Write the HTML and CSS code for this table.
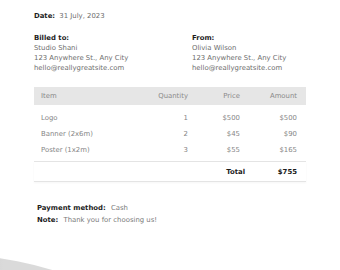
FILE: index.html
```html
<!DOCTYPE html>
<html>
<head>
<meta charset="utf-8">
<link rel="stylesheet" href="styles.css">
</head>
<body>
<div class="page">
  <div class="date"><span class="label">Date:</span> <span class="val">31 July, 2023</span></div>
  <div class="parties">
    <div class="party">
      <div class="label">Billed to:</div>
      <div>Studio Shani</div>
      <div>123 Anywhere St., Any City</div>
      <div>hello@reallygreatsite.com</div>
    </div>
    <div class="party">
      <div class="label">From:</div>
      <div>Olivia Wilson</div>
      <div>123 Anywhere St., Any City</div>
      <div>hello@reallygreatsite.com</div>
    </div>
  </div>
  <div class="table">
    <div class="row head">
      <div class="c-item">Item</div><div>Quantity</div><div>Price</div><div>Amount</div>
    </div>
    <div class="body">
      <div class="row">
        <div class="c-item">Logo</div><div>1</div><div>$500</div><div>$500</div>
      </div>
      <div class="row">
        <div class="c-item">Banner (2x6m)</div><div>2</div><div>$45</div><div>$90</div>
      </div>
      <div class="row">
        <div class="c-item">Poster (1x2m)</div><div>3</div><div>$55</div><div>$165</div>
      </div>
    </div>
    <div class="row total">
      <div class="c-item"></div><div></div><div class="total-label">Total</div><div>$755</div>
    </div>
  </div>
  <div class="notes">
    <div><span class="label">Payment method:</span> <span class="val">Cash</span></div>
    <div><span class="label">Note:</span> <span class="val">Thank you for choosing us!</span></div>
  </div>
</div>
<div class="deco"><div class="swoosh"></div></div>
</body>
</html>
```
FILE: styles.css
```css
html, body {
  margin: 0;
  padding: 0;
  width: 340px;
  height: 270px;
  overflow: hidden;
  background: #fff;
}
body {
  position: relative;
  font-family: "DejaVu Sans", sans-serif;
  font-size: 6.9px;
  line-height: 10px;
  color: #6e6e6e;
}
.page {
  padding: 11px 34px 0 34px;
}
.label {
  font-weight: bold;
  color: #1c1c1c;
}
.date .val {
  margin-left: 2px;
}
.parties {
  margin-top: 12px;
  display: grid;
  grid-template-columns: 158px 1fr;
}
.table {
  margin-top: 14px;
  width: 272px;
  color: #858585;
}
.row {
  display: grid;
  grid-template-columns: 1fr 60px 52px 57px;
  padding: 0 9px 0 7px;
  text-align: right;
  height: 16px;
  align-items: center;
}
.row .c-item {
  text-align: left;
}
.head {
  background: #e6e6e6;
  height: 18px;
  color: #8a8a8a;
}
.body {
  padding: 5px 0 3px;
  border-bottom: 1px solid #e4e4e4;
}
.total {
  height: 19px;
  border-bottom: 1px solid #e4e4e4;
  box-shadow: 0 1px 2px rgba(0,0,0,0.04);
  font-weight: bold;
  color: #1c1c1c;
}
.total-label {
  margin-right: -5px;
}
.notes {
  margin-top: 20px;
  padding-left: 3px;
  line-height: 12px;
}
.notes .val {
  margin-left: 3px;
  color: #7a7a7a;
}
.deco {
  position: absolute;
  left: 0;
  top: 0;
  width: 340px;
  height: 270px;
  overflow: hidden;
  pointer-events: none;
}
.swoosh {
  position: absolute;
  left: -438px;
  top: 254px;
  width: 762px;
  height: 762px;
  border-radius: 50%;
  background: linear-gradient(90deg, #c4c4c4 50%, #dadada 58%);
}
```
